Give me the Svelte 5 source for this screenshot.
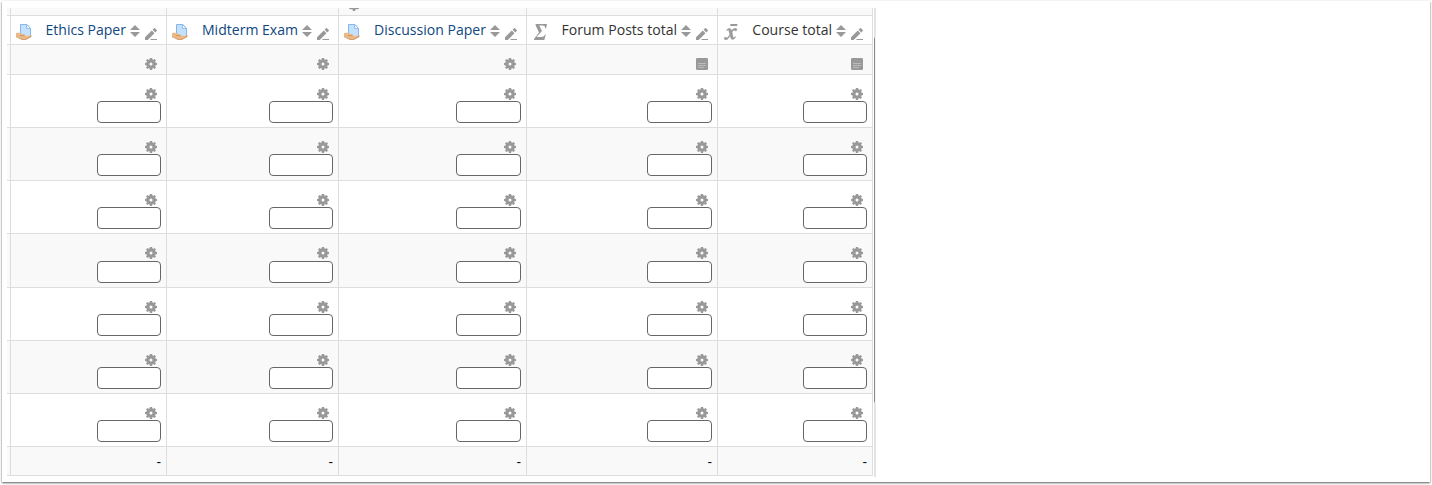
<script>
  const columns = [
    { name: 'Ethics Paper', kind: 'assign' },
    { name: 'Midterm Exam', kind: 'assign' },
    { name: 'Discussion Paper', kind: 'assign', wide: true, inset: true },
    { name: 'Forum Posts total', kind: 'sum', wide: true },
    { name: 'Course total', kind: 'mean' }
  ];
  const rows = [1, 2, 3, 4, 5, 6, 7];
</script>

{#snippet gear()}
  <svg class="gear" viewBox="0 0 12 12" width="12" height="12">
    <g fill="#999">
      <path fill-rule="evenodd" d="M6 1.300a4.700 4.700 0 1 0 0 9.400a4.700 4.700 0 1 0 0-9.400zM6 4.500a1.500 1.500 0 1 1 0 3a1.500 1.500 0 1 1 0-3z" />
      {#each [0, 45, 90, 135, 180, 225, 270, 315] as a}
        <path d="M4.600 2.200L4.900 0h2.200l.3 2.200z" transform="rotate({a} 6 6)" />
      {/each}
    </g>
  </svg>
{/snippet}

<div class="card">
  <div class="viewport">
    <div class="grid">
      <div class="cell alt"></div>
      {#each columns as c, i}
        <div class="cell alt category">
          {#if i === 2}
            <svg width="12" height="3" viewBox="0 9 12 3"><path fill="#999" d="M1 8.500h10v1.300L9 10.300 7.200 10.500V12H4.800v-1.500L3 10.300l-2-.5z" /></svg>
          {/if}
        </div>
      {/each}

      <div class="cell"></div>
      {#each columns as c}
        <div class="cell head">
          {#if c.kind === 'assign'}
            <svg class="type" width="16" height="16" viewBox="0 0 16 16">
              <path d="M4.500.5h6.300l3.700 3.700v9h-10z" fill="#c4e0fb" stroke="#84b6ea" />
              <path d="M10.500.5v4h4z" fill="#eef7ff" stroke="#84b6ea" stroke-width=".8" />
              <path d="M0 9.200c1.500-.6 3-.5 4.500 0l4 1.300c.8.300.8 1 0 1.100l2.500.3 4-.7c1.300-.1 1.300.8.600 1.200L11 15.200c-1.500.9-4 .9-5.500.3L2.500 13.600 0 12.500z" fill="#ebb888" />
              <path d="M4 11.400l4.500.4M0 12.500l2.500 1.300 3 1.500c1.800.5 4 .4 5.500-.4l4-2.600" fill="none" stroke="#c98f58" stroke-width=".8" />
            </svg>
          {:else if c.kind === 'sum'}
            <svg class="type" width="16" height="16" viewBox="0 0 16 16">
              <path d="M3.500 0H15l-1 4.500h-.8C13.200 2.300 12.500 1.500 10.500 1.500H7.200L10 7l-5.500 6h4.700c2 0 2.700-.7 3.800-2.500h.8L12.300 16H2v-1l5-6.500-3.200-6.700z" fill="#999" />
            </svg>
          {:else}
            <svg class="type" width="16" height="16" viewBox="0 0 16 16">
              <path d="M7.500 0h7l-.4 2H7.100z" fill="#999" />
              <path d="M3.500 6.200C4.300 5 5.200 4.400 6.400 4.400c1.500 0 2 1 2.300 2.300C9.800 5 11 4.300 12.300 4.300c1 0 1.600.6 1.600 1.300 0 .8-.5 1.300-1.200 1.300-.8 0-1-.6-1.500-.6-.8 0-1.500 1-2.100 2l.8 4c.2 1 .4 1.400.8 1.400.5 0 1-.6 1.400-1.200l.6.4c-.9 1.600-1.800 2.500-3.100 2.500-1.500 0-1.900-1.200-2.200-2.800l-.2-1C5.800 14 4.700 15.800 3 15.800c-1 0-1.800-.6-1.800-1.400 0-.7.5-1.200 1.200-1.200.8 0 1 .6 1.500.6.9 0 2-1.700 2.900-3.600L6 7.400c-.2-.9-.4-1.300-.8-1.300-.4 0-.8.300-1.200.7z" fill="#999" stroke="#999" stroke-width=".4" />
            </svg>
          {/if}
          <span class="label" class:link={c.kind === 'assign'}>{c.name}</span>
          <svg class="sort" width="10" height="12" viewBox="0 0 10 12">
            <path d="M5 0l5 5H0zM0 7h10l-5 5z" fill="#999" />
          </svg>
          <svg class="pencil" width="12" height="12" viewBox="0 0 12 12">
            <path d="M0 12V9.300L6.800 2.500l2.700 2.700L2.700 12zM7.600 1.700L9 .3q.5-.5 1 0l1.700 1.700q.5.500 0 1L10.300 4.400zM6 11h6v1H5z" fill="#999" />
          </svg>
        </div>
      {/each}

      <div class="cell alt"></div>
      {#each columns as c}
        <div class="cell alt controls" class:inset={c.inset}>
          {#if c.kind === 'assign'}
            {@render gear()}
          {:else}
            <svg class="gear" width="12" height="12" viewBox="0 0 12 12">
              <rect width="12" height="12" rx="1.200" fill="#999" />
              <path d="M2 5.500h8M2 7.500h8M2 9.500h6" stroke="#c4c4c4" stroke-width=".8" />
            </svg>
          {/if}
        </div>
      {/each}

      {#each rows as r}
        <div class="cell" class:alt={r % 2 === 0}></div>
        {#each columns as c}
          <div class="cell grade" class:alt={r % 2 === 0} class:inset={c.inset}>
            {@render gear()}
            <input type="text" class:wide={c.wide} aria-label={c.name} />
          </div>
        {/each}
      {/each}

      <div class="cell alt"></div>
      {#each columns as c}
        <div class="cell alt average">-</div>
      {/each}
    </div>
    <div class="scrollbar"><div class="thumb"></div></div>
  </div>
</div>

<style>
  :global(body) {
    margin: 0;
    background: #fff;
  }
  .card {
    box-sizing: border-box;
    width: 1428px;
    height: 481px;
    margin: 1px 2px 3px;
    padding: 7px 0 0 5px;
    background: #fff;
    box-shadow: 0 1px 2px rgba(0, 0, 0, 0.65);
    font: 14.06px/20px 'Open Sans', sans-serif;
    color: #333;
  }
  .viewport {
    display: flex;
    gap: 1px;
  }
  .grid {
    display: grid;
    grid-template-columns: 4px 156px 172px 188px 191px 155px;
    grid-template-rows: 8px 29px 30px 53px 53px 53px 54px 53px 53px 53px 29px;
  }
  .cell {
    box-sizing: border-box;
    min-width: 0;
    min-height: 0;
    border-right: 1px solid #ddd;
    border-bottom: 1px solid #ddd;
    background: #fff;
  }
  .alt {
    background: #f9f9f9;
  }
  .category {
    display: flex;
    padding-left: 9px;
  }
  .head {
    display: flex;
    align-items: flex-start;
    padding: 8px 9px 0 5px;
  }
  .head svg {
    flex: none;
  }
  .label {
    margin: -4px 4px 0 auto;
    white-space: nowrap;
  }
  .link {
    color: #0f4780;
  }
  .sort {
    margin: 1px 5px 0 0;
  }
  .pencil {
    margin-top: 4px;
  }
  .controls,
  .grade {
    display: flex;
    flex-direction: column;
    align-items: flex-end;
    padding: 13px 5px 4px 0;
  }
  .gear {
    flex: none;
    margin-right: 4px;
  }
  .inset .gear {
    margin-right: 5px;
  }
  input {
    box-sizing: border-box;
    width: 64px;
    height: 22px;
    margin: auto 0 0;
    padding: 0;
    border: 1px solid #666;
    border-radius: 4px;
    background: #fff;
  }
  input.wide {
    width: 65px;
  }
  .average {
    padding: 5px 5px 0 0;
    color: #111;
    text-align: right;
  }
  .scrollbar {
    box-sizing: border-box;
    width: 2px;
    height: 469px;
    padding-top: 29px;
    background: #e3e3e3;
  }
  .thumb {
    height: 366px;
    border-radius: 2px 0 0 2px;
    background: linear-gradient(to right, #888 50%, #f4f4f4 50%);
  }
</style>
